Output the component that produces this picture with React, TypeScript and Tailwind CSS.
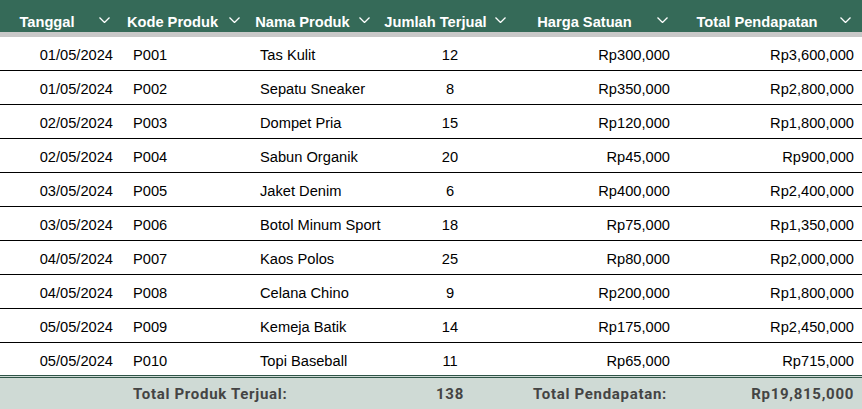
import React from "react";

const rows = [
  ["01/05/2024", "P001", "Tas Kulit", "12", "Rp300,000", "Rp3,600,000"],
  ["01/05/2024", "P002", "Sepatu Sneaker", "8", "Rp350,000", "Rp2,800,000"],
  ["02/05/2024", "P003", "Dompet Pria", "15", "Rp120,000", "Rp1,800,000"],
  ["02/05/2024", "P004", "Sabun Organik", "20", "Rp45,000", "Rp900,000"],
  ["03/05/2024", "P005", "Jaket Denim", "6", "Rp400,000", "Rp2,400,000"],
  ["03/05/2024", "P006", "Botol Minum Sport", "18", "Rp75,000", "Rp1,350,000"],
  ["04/05/2024", "P007", "Kaos Polos", "25", "Rp80,000", "Rp2,000,000"],
  ["04/05/2024", "P008", "Celana Chino", "9", "Rp200,000", "Rp1,800,000"],
  ["05/05/2024", "P009", "Kemeja Batik", "14", "Rp175,000", "Rp2,450,000"],
  ["05/05/2024", "P010", "Topi Baseball", "11", "Rp65,000", "Rp715,000"],
];

const headers = ["Tanggal", "Kode Produk", "Nama Produk", "Jumlah Terjual", "Harga Satuan", "Total Pendapatan"];

const gridCols = "grid grid-cols-[121px_130px_130px_136px_162px_183px]";

function Chevron() {
  return (
    <svg width="11" height="6" viewBox="0 0 11 6" className="mt-[5px] shrink-0">
      <polyline points="0.5,0.5 5.5,5.5 10.5,0.5" fill="none" stroke="#ffffff" strokeWidth="1.3" />
    </svg>
  );
}

export default function App() {
  return (
    <div className="w-[862px] h-[409px] overflow-hidden bg-white font-['Liberation_Sans',Arial,sans-serif]">
      <div className={`${gridCols} h-[32px] bg-[#356a58] text-white font-bold text-[14.67px] leading-[20px]`}>
        {headers.map((h) => (
          <div key={h} className="flex items-start pt-[12px] pr-[11px] min-w-0">
            <div className="flex-1 flex justify-center mr-[5px] whitespace-nowrap">
              <span>{h}</span>
            </div>
            <Chevron />
          </div>
        ))}
      </div>
      <div className="h-[5px] bg-[#c8c8c8]" />
      {rows.map((r, i) => (
        <div
          key={i}
          className={`${gridCols} text-[14.67px] leading-[20px] text-black ${i < rows.length - 1 ? "h-[34px] border-b border-black pt-[8px]" : "h-[32px] pt-[8px]"}`}
        >
          <div className="text-right pr-[8px]">{r[0]}</div>
          <div className="pl-[12px]">{r[1]}</div>
          <div className="pl-[9px] whitespace-nowrap">{r[2]}</div>
          <div className="text-center pl-[2px]">{r[3]}</div>
          <div className="text-right pr-[9px]">{r[4]}</div>
          <div className="text-right pr-[8px]">{r[5]}</div>
        </div>
      ))}
      <div className="border-t-[3px] border-double border-[#2f5548] h-[34px] bg-[#cfdad5]">
        <div className={`${gridCols} h-[31px] items-center font-['Roboto',sans-serif] font-bold text-[15px] tracking-[0.7px] leading-[20px] text-[#444444]`}>
          <div />
          <div className="col-span-2 pl-[12px] whitespace-nowrap">Total Produk Terjual:</div>
          <div className="text-center pl-[2px]">138</div>
          <div className="text-right pr-[12px] whitespace-nowrap">Total Pendapatan:</div>
          <div className="text-right pr-[8px]">Rp19,815,000</div>
        </div>
      </div>
    </div>
  );
}
